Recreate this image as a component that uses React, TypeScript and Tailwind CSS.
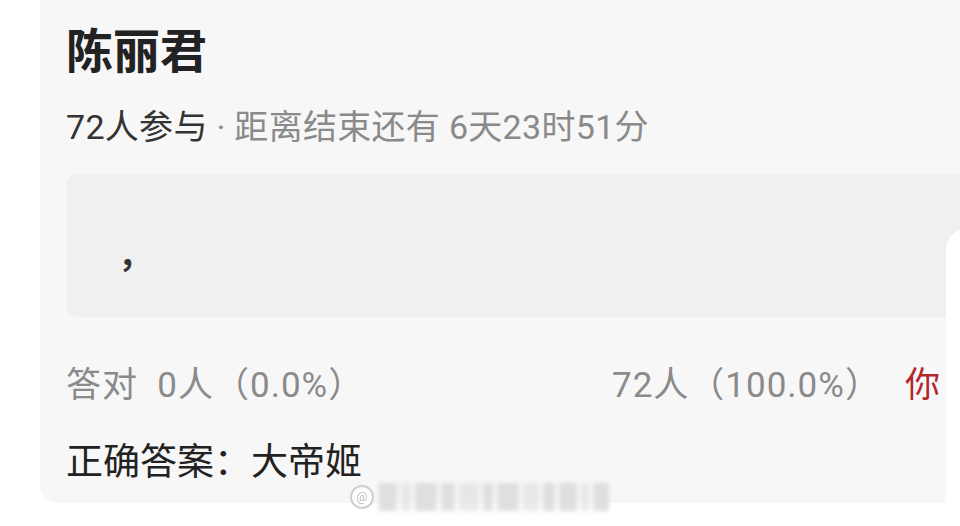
import React from "react";

const font = { fontFamily: 'Roboto, "Noto Sans CJK SC", sans-serif' };

function Watermark() {
  // blurred "@name" stamp at the bottom of the shot
  const bars = [18, 10, 22, 14, 20, 10, 22, 16, 12, 18, 8, 16];
  return (
    <div className="absolute left-[350px] top-[483px] flex items-center gap-[5px]">
      <div className="w-[24px] h-[24px] rounded-full border-2 border-[#cfcfcf] bg-white flex items-center justify-center text-[12px] text-[#bbb] blur-[0.5px]">
        @
      </div>
      <div className="flex items-end gap-[4px] blur-[2px]">
        {bars.map((w, i) => (
          <div key={i} className="h-[28px] bg-[#dcdcdc]" style={{ width: w, opacity: i % 3 === 1 ? 0.6 : 0.9 }} />
        ))}
      </div>
    </div>
  );
}

function PollCard() {
  return (
    <div className="ml-[40px] w-[940px] bg-[#f7f7f7] rounded-bl-[18px] pl-[26px] pt-[24px] pb-[18px]">
      <h1 className="text-[47px] font-bold leading-[56px] text-[#222]">陈丽君</h1>
      <p className="mt-[27px] text-[34px] leading-[40px] text-[#333] tracking-[0.3px]">
        72人参与<span className="text-[#8a8a8a]"> · 距离结束还有 6天23时51分</span>
      </p>
      <div className="mt-[27px] h-[143px] bg-[#f0f0f0] rounded-l-[12px] flex items-center pl-[52px]">
        <span className="text-[34px] text-[#333] font-bold mt-[20px]">，</span>
      </div>
      <div className="mt-[48px] flex items-center text-[35px] leading-[42px] text-[#8a8a8a] tracking-[1px]">
        <div className="w-[546px]">答对&nbsp;&nbsp;0人（0.0%）</div>
        <div>72人（100.0%）</div>
        <div className="ml-[24px] text-[#b3282d]">你</div>
      </div>
      <p className="mt-[34px] text-[37px] leading-[44px] text-[#222]">正确答案：大帝姬</p>
    </div>
  );
}

export default function App() {
  return (
    <div className="relative w-[960px] h-[526px] bg-white overflow-hidden" style={font}>
      <PollCard />
      {/* next card peeking in from the right */}
      <div className="absolute left-[946px] top-[228px] w-[40px] h-[290px] bg-white rounded-tl-[22px]" />
      <Watermark />
    </div>
  );
}
